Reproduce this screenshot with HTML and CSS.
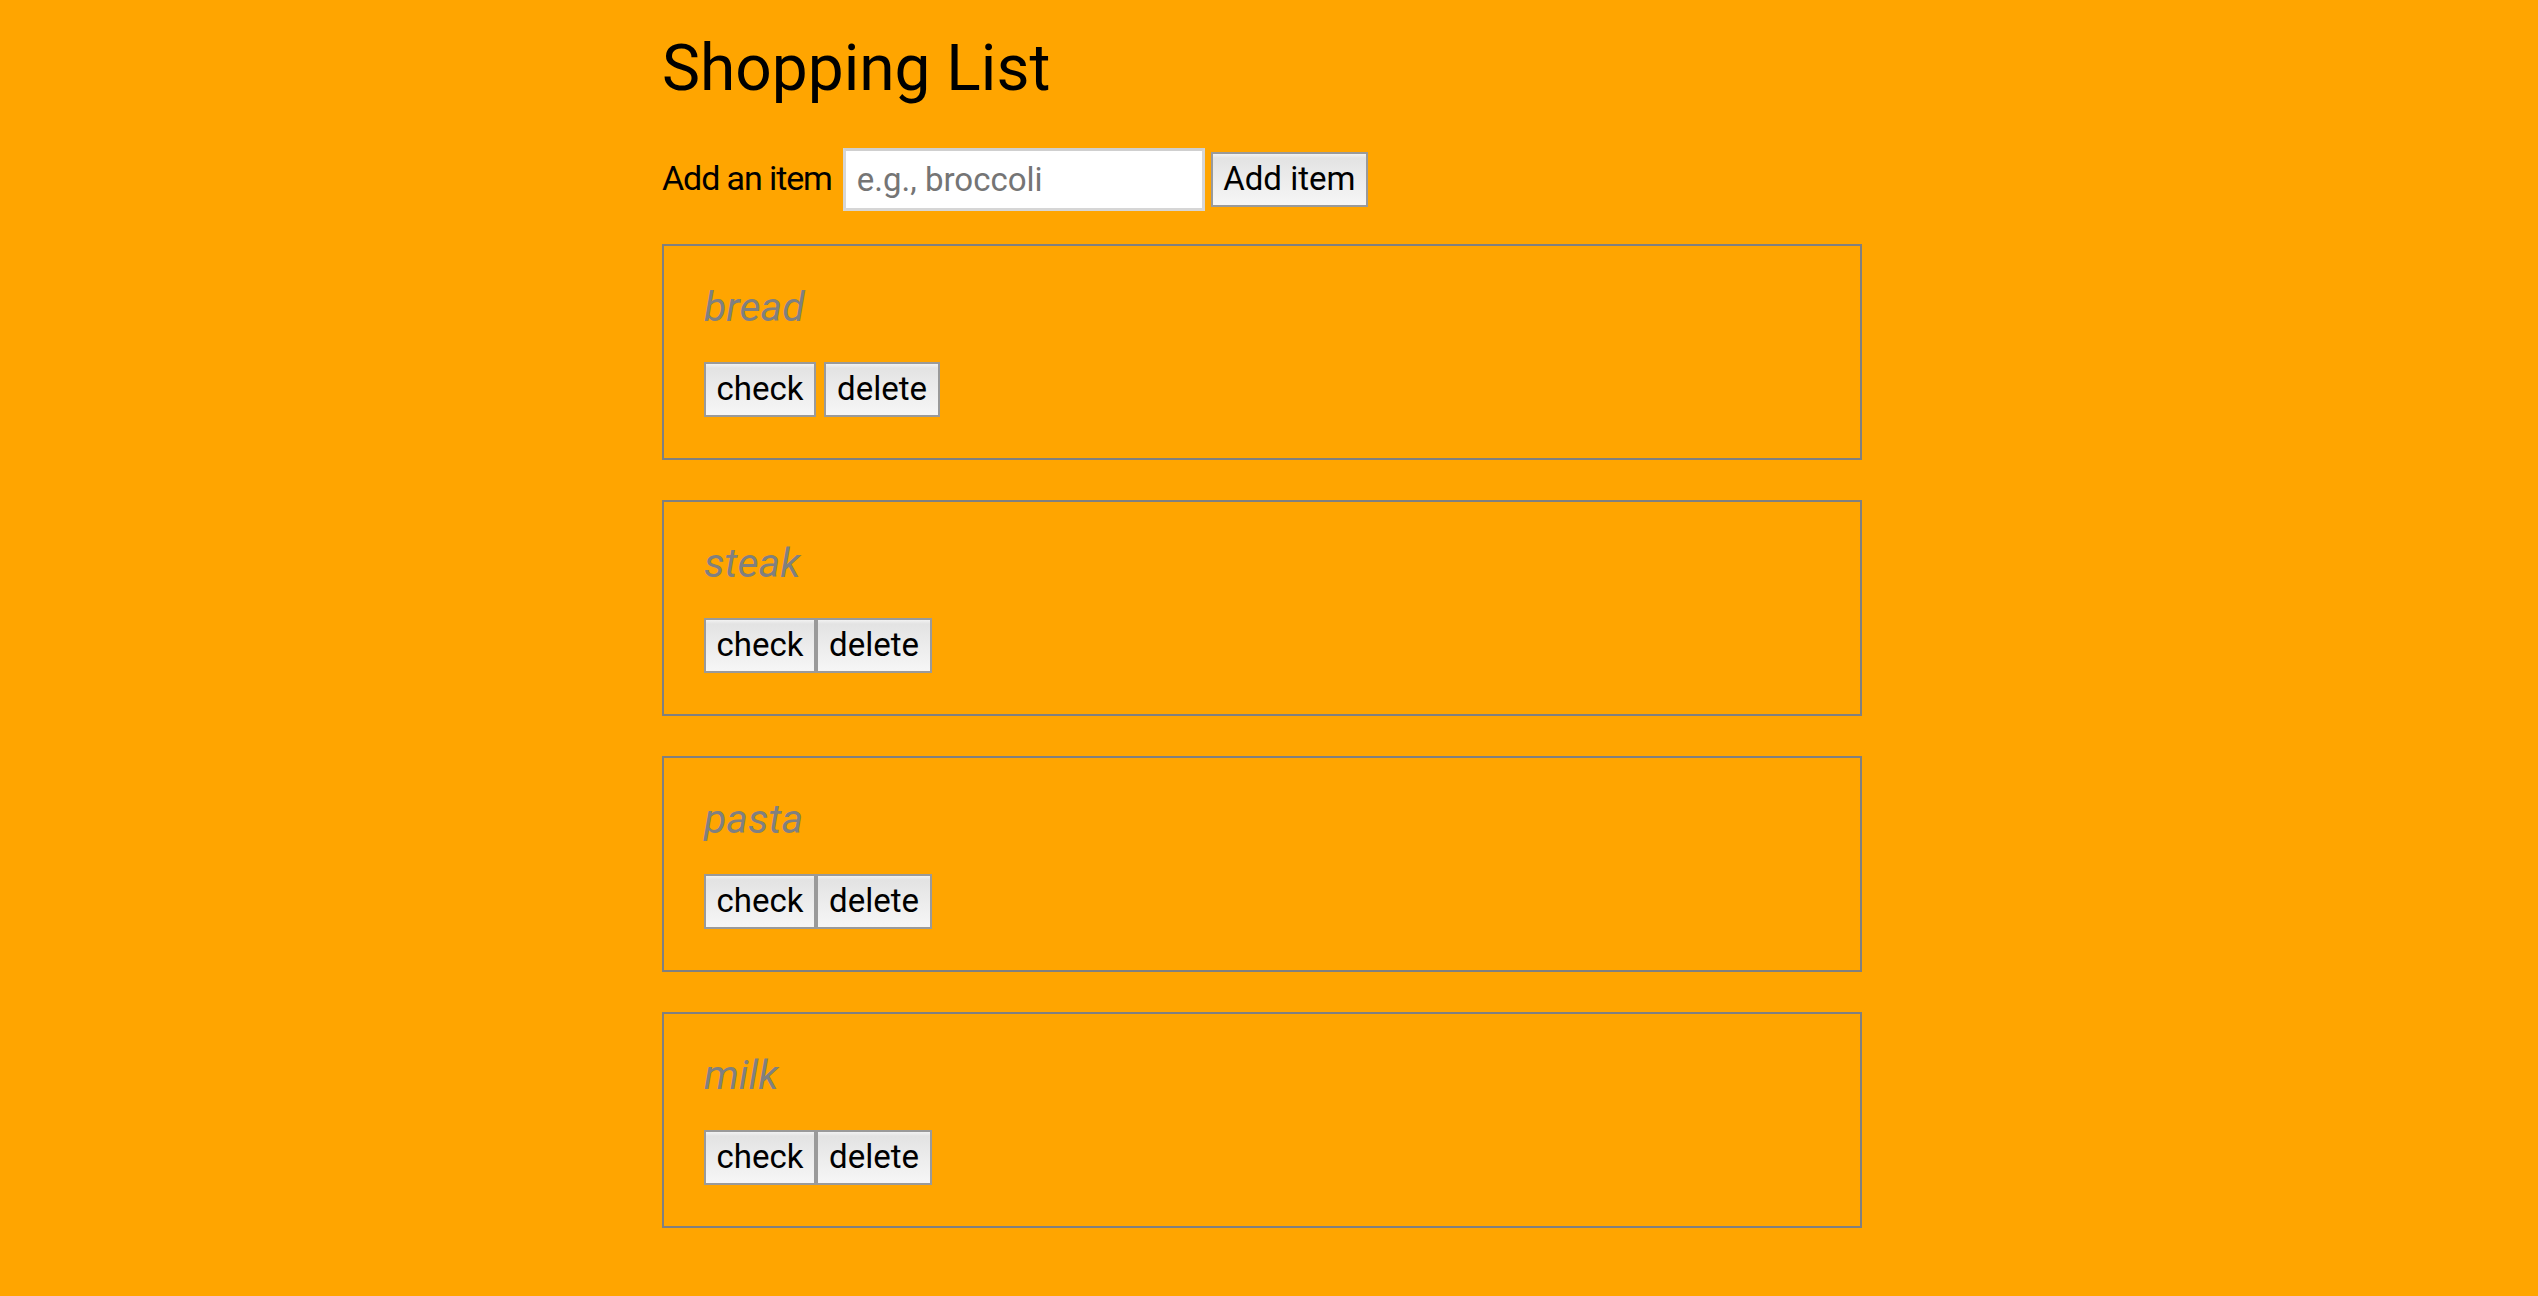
FILE: index.html
```html
<!DOCTYPE html>
<html lang="en">
<head>
<meta charset="utf-8">
<title>Shopping List</title>
<link rel="stylesheet" href="styles.css">
</head>
<body>
<main class="page">
  <h1 class="title">Shopping List</h1>
  <form class="add-form">
    <label class="add-label" for="item">Add an item</label>
    <input class="add-input" id="item" type="text" placeholder="e.g., broccoli">
    <button class="btn add-btn" type="button">Add item</button>
  </form>
  <ul class="list">
    <li class="item">
      <h3 class="item-name">bread</h3>
      <div class="actions spaced">
        <button class="btn btn-check" type="button">check</button>
        <button class="btn btn-delete" type="button">delete</button>
      </div>
    </li>
    <li class="item">
      <h3 class="item-name">steak</h3>
      <div class="actions">
        <button class="btn btn-check" type="button">check</button>
        <button class="btn btn-delete" type="button">delete</button>
      </div>
    </li>
    <li class="item">
      <h3 class="item-name">pasta</h3>
      <div class="actions">
        <button class="btn btn-check" type="button">check</button>
        <button class="btn btn-delete" type="button">delete</button>
      </div>
    </li>
    <li class="item">
      <h3 class="item-name">milk</h3>
      <div class="actions">
        <button class="btn btn-check" type="button">check</button>
        <button class="btn btn-delete" type="button">delete</button>
      </div>
    </li>
  </ul>
</main>
</body>
</html>
```
FILE: styles.css
```css
html, body {
  background: #ffa500;
}
body {
  margin: 0;
  padding: 0 14px 0 0;
  font-family: Roboto, "Liberation Sans", sans-serif;
  color: #000;
}
.page {
  width: 1200px;
  margin: 0 auto;
  padding-bottom: 40px;
}
.title {
  margin: 33px 0 43px;
  font-size: 64px;
  font-weight: 400;
  line-height: 72px;
}
.add-form {
  display: flex;
  align-items: center;
  margin: 0 0 33px;
}
.add-label {
  font-size: 34px;
  letter-spacing: -1.1px;
  line-height: 41px;
  margin-right: 11px;
  margin-top: -3px;
}
.add-input {
  box-sizing: border-box;
  width: 362px;
  height: 63px;
  border: 3px solid #d6d6d6;
  border-top-color: #cfcfcf;
  padding: 0 11px;
  font-family: Roboto, "Liberation Sans", sans-serif;
  font-size: 33px;
  background: #fff;
  outline: none;
}
.add-input::placeholder {
  color: #757575;
}
.btn {
  box-sizing: border-box;
  height: 55px;
  padding: 0 0 3px;
  border: 2px solid #9a9a9a;
  border-radius: 0;
  background: linear-gradient(to bottom, #f2f2f2 0%, #e3e3e3 8%, #ececec 50%, #f6f6f6 100%);
  font-family: Roboto, "Liberation Sans", sans-serif;
  font-size: 33px;
  color: #000;
  line-height: 1;
  text-align: center;
}
.add-btn {
  width: 157px;
  margin-left: 6px;
}
.btn-check {
  width: 112px;
}
.btn-delete {
  width: 116px;
}
.list {
  list-style: none;
  margin: 0;
  padding: 0;
  display: flex;
  flex-direction: column;
  gap: 40px;
}
.item {
  box-sizing: border-box;
  width: 1200px;
  border: 2px solid #808080;
  padding: 37px 40px 41px;
}
.item-name {
  margin: 0 0 31px;
  font-size: 41px;
  line-height: 48px;
  font-style: italic;
  font-weight: 400;
  color: #808080;
}
.actions {
  display: flex;
}
.actions.spaced {
  gap: 8px;
}
```
